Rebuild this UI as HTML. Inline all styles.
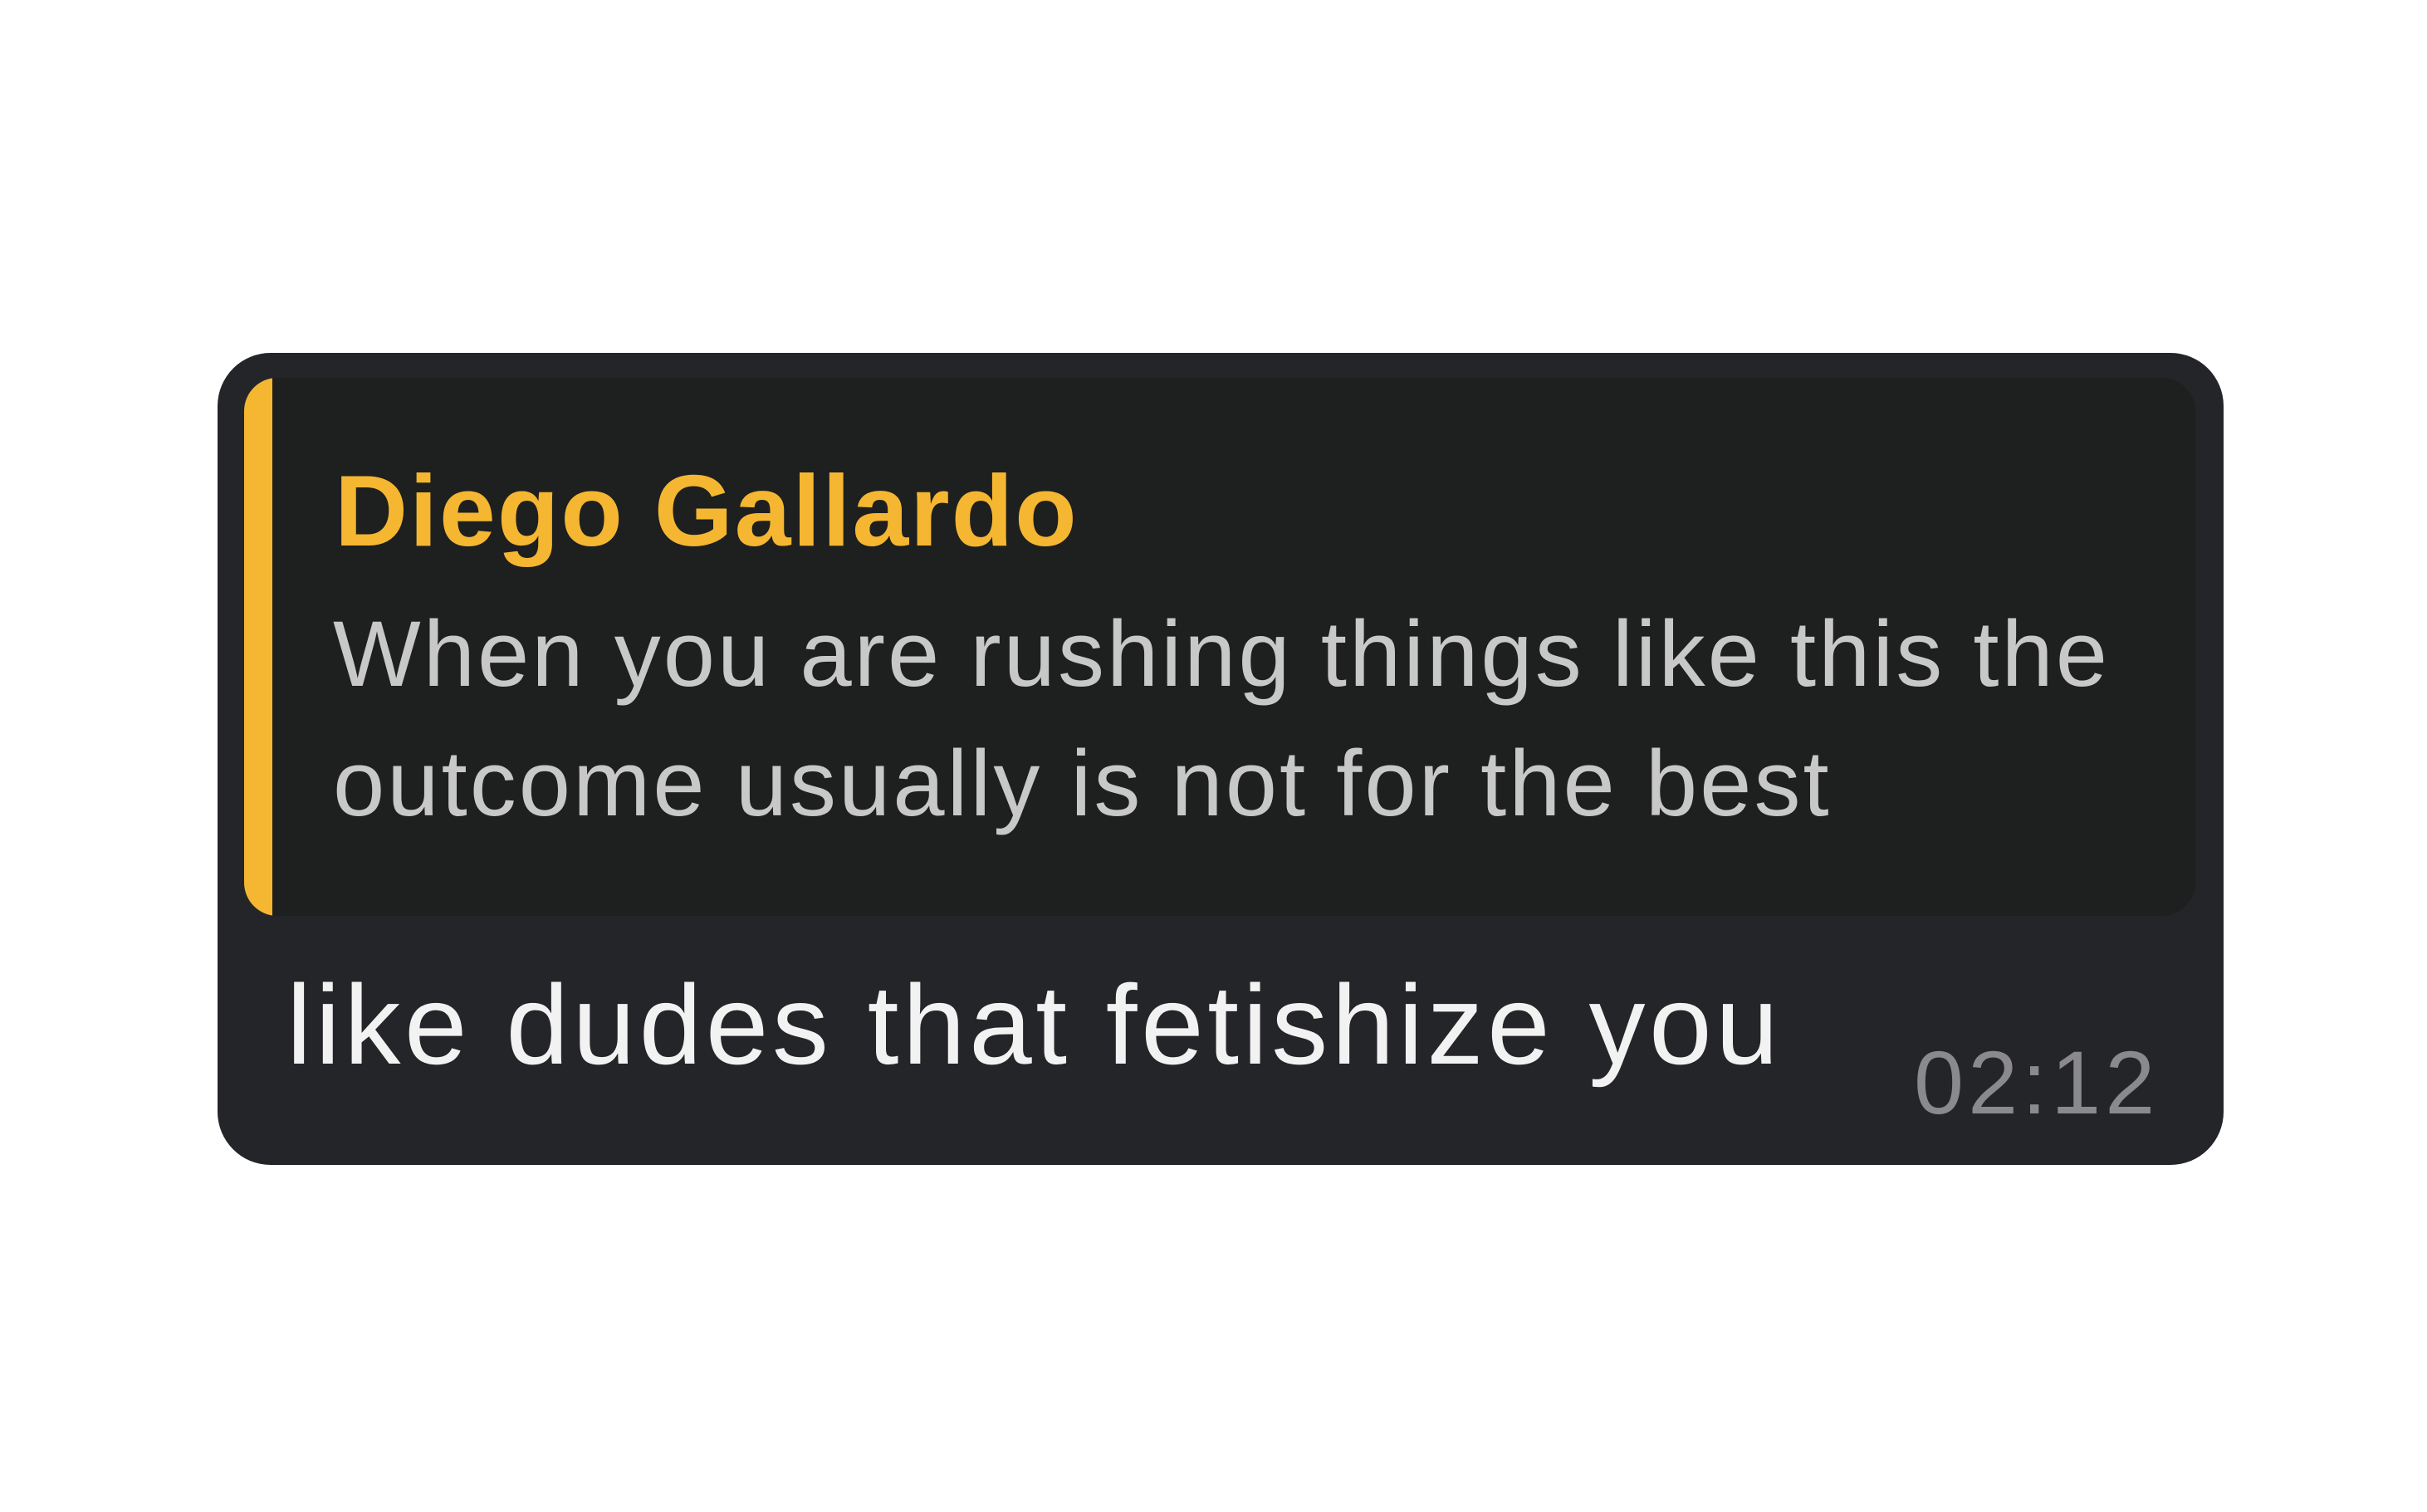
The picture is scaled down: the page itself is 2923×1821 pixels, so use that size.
<!DOCTYPE html>
<html><head><meta charset="utf-8"><style>
html,body{margin:0;padding:0;width:2923px;height:1821px;background:#fff;overflow:hidden;font-family:"Liberation Sans",sans-serif;}
.bubble{position:absolute;left:262px;top:425px;width:2416px;height:978px;background:#242528;border-radius:64px;}
.quote{position:absolute;left:294px;top:455px;width:2350px;height:648px;background:#1e1f1f;border-radius:40px;overflow:hidden;}
.bar{position:absolute;left:0;top:0;width:34px;height:100%;background:#f5b731;}
.name{position:absolute;left:403px;top:554px;font-weight:bold;font-size:122px;letter-spacing:2px;color:#f5b731;white-space:nowrap;line-height:1;}
.qt{position:absolute;left:401px;top:710px;font-size:112px;letter-spacing:3px;color:#c8c8c8;line-height:156px;white-space:nowrap;}
.main{position:absolute;left:345px;top:1166px;font-size:136px;letter-spacing:4.5px;color:#f2f2f2;white-space:nowrap;line-height:1;}
.time{position:absolute;left:2305px;top:1250px;font-size:108px;color:#8a8a8e;white-space:nowrap;line-height:1;letter-spacing:5px;}
</style></head><body>
<div class="bubble"></div>
<div class="quote"><div class="bar"></div></div>
<div class="name">Diego Gallardo</div>
<div class="qt">When you are rushing things like this the<br>outcome usually is not for the best</div>
<div class="main">like dudes that fetishize you</div>
<div class="time">02:12</div>
</body></html>
